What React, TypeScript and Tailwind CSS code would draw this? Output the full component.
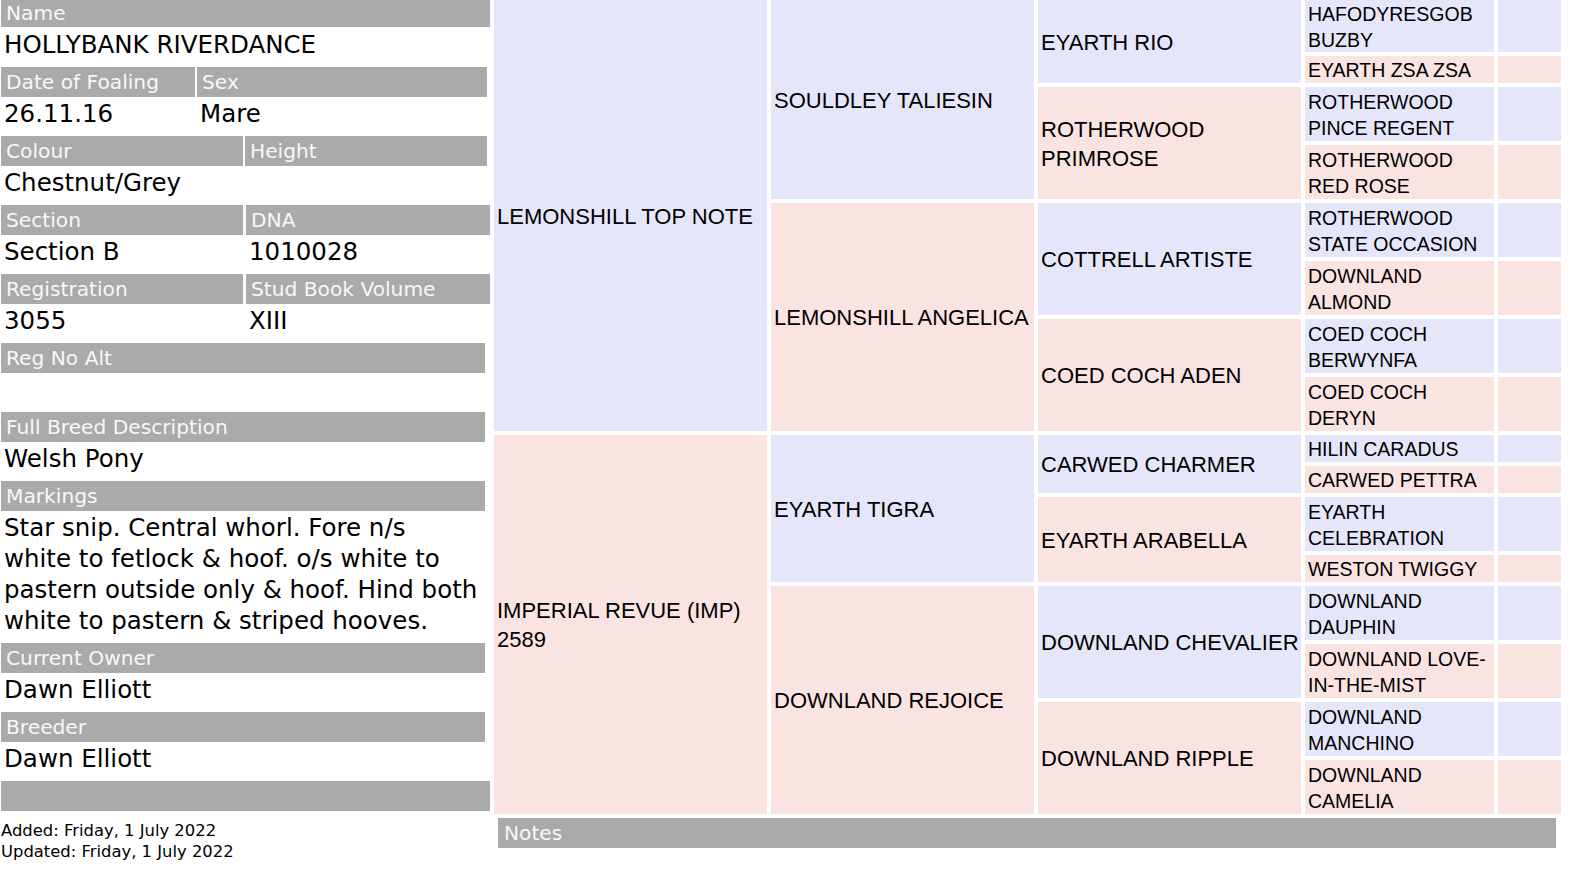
import React from "react";

const LAV = "bg-[#e6e6fa]";
const PINK = "bg-[#fae4e2]";

function Label({ children, className = "" }: { children?: React.ReactNode; className?: string }) {
  return (
    <div className={`bg-[#aaaaaa] h-[30px] leading-[30px] pl-[5px] text-[20.2px] text-[#f8f8f8] whitespace-nowrap overflow-hidden ${className}`}>
      {children}
    </div>
  );
}

function Value({ children, className = "" }: { children?: React.ReactNode; className?: string }) {
  return (
    <div className={`h-[39px] pt-[2px] pl-[3px] text-[24.5px] leading-[29px] text-black whitespace-nowrap ${className}`}>
      {children}
    </div>
  );
}

type Cell = { text: React.ReactNode; cls: string };

const cells: Cell[] = [
  // column 1
  { text: "LEMONSHILL TOP NOTE", cls: `col-start-1 row-start-1 row-span-8 ${LAV} big` },
  { text: (<>IMPERIAL REVUE (IMP)<br />2589</>), cls: `col-start-1 row-start-9 row-span-8 ${PINK} big` },
  // column 2
  { text: "SOULDLEY TALIESIN", cls: `col-start-2 row-start-1 row-span-4 ${LAV} big` },
  { text: "LEMONSHILL ANGELICA", cls: `col-start-2 row-start-5 row-span-4 ${PINK} big` },
  { text: "EYARTH TIGRA", cls: `col-start-2 row-start-9 row-span-4 ${LAV} big` },
  { text: "DOWNLAND REJOICE", cls: `col-start-2 row-start-13 row-span-4 ${PINK} big` },
  // column 3
  { text: "EYARTH RIO", cls: `col-start-3 row-start-1 row-span-2 ${LAV} big` },
  { text: (<>ROTHERWOOD<br />PRIMROSE</>), cls: `col-start-3 row-start-3 row-span-2 ${PINK} big` },
  { text: "COTTRELL ARTISTE", cls: `col-start-3 row-start-5 row-span-2 ${LAV} big` },
  { text: "COED COCH ADEN", cls: `col-start-3 row-start-7 row-span-2 ${PINK} big` },
  { text: "CARWED CHARMER", cls: `col-start-3 row-start-9 row-span-2 ${LAV} big` },
  { text: "EYARTH ARABELLA", cls: `col-start-3 row-start-11 row-span-2 ${PINK} big` },
  { text: "DOWNLAND CHEVALIER", cls: `col-start-3 row-start-13 row-span-2 ${LAV} big` },
  { text: "DOWNLAND RIPPLE", cls: `col-start-3 row-start-15 row-span-2 ${PINK} big` },
  // column 4
  { text: (<>HAFODYRESGOB<br />BUZBY</>), cls: `col-start-4 row-start-1 ${LAV} small` },
  { text: "EYARTH ZSA ZSA", cls: `col-start-4 row-start-2 ${PINK} small` },
  { text: (<>ROTHERWOOD<br />PINCE REGENT</>), cls: `col-start-4 row-start-3 ${LAV} small` },
  { text: (<>ROTHERWOOD<br />RED ROSE</>), cls: `col-start-4 row-start-4 ${PINK} small` },
  { text: (<>ROTHERWOOD<br />STATE OCCASION</>), cls: `col-start-4 row-start-5 ${LAV} small` },
  { text: (<>DOWNLAND<br />ALMOND</>), cls: `col-start-4 row-start-6 ${PINK} small` },
  { text: (<>COED COCH<br />BERWYNFA</>), cls: `col-start-4 row-start-7 ${LAV} small` },
  { text: (<>COED COCH<br />DERYN</>), cls: `col-start-4 row-start-8 ${PINK} small` },
  { text: "HILIN CARADUS", cls: `col-start-4 row-start-9 ${LAV} small` },
  { text: "CARWED PETTRA", cls: `col-start-4 row-start-10 ${PINK} small` },
  { text: (<>EYARTH<br />CELEBRATION</>), cls: `col-start-4 row-start-11 ${LAV} small` },
  { text: "WESTON TWIGGY", cls: `col-start-4 row-start-12 ${PINK} small` },
  { text: (<>DOWNLAND<br />DAUPHIN</>), cls: `col-start-4 row-start-13 ${LAV} small` },
  { text: (<>DOWNLAND LOVE-<br />IN-THE-MIST</>), cls: `col-start-4 row-start-14 ${PINK} small` },
  { text: (<>DOWNLAND<br />MANCHINO</>), cls: `col-start-4 row-start-15 ${LAV} small` },
  { text: (<>DOWNLAND<br />CAMELIA</>), cls: `col-start-4 row-start-16 ${PINK} small` },
  // column 5
  { text: null, cls: `col-start-5 row-start-1 ${LAV}` },
  { text: null, cls: `col-start-5 row-start-2 ${PINK}` },
  { text: null, cls: `col-start-5 row-start-3 ${LAV}` },
  { text: null, cls: `col-start-5 row-start-4 ${PINK}` },
  { text: null, cls: `col-start-5 row-start-5 ${LAV}` },
  { text: null, cls: `col-start-5 row-start-6 ${PINK}` },
  { text: null, cls: `col-start-5 row-start-7 ${LAV}` },
  { text: null, cls: `col-start-5 row-start-8 ${PINK}` },
  { text: null, cls: `col-start-5 row-start-9 ${LAV}` },
  { text: null, cls: `col-start-5 row-start-10 ${PINK}` },
  { text: null, cls: `col-start-5 row-start-11 ${LAV}` },
  { text: null, cls: `col-start-5 row-start-12 ${PINK}` },
  { text: null, cls: `col-start-5 row-start-13 ${LAV}` },
  { text: null, cls: `col-start-5 row-start-14 ${PINK}` },
  { text: null, cls: `col-start-5 row-start-15 ${LAV}` },
  { text: null, cls: `col-start-5 row-start-16 ${PINK}` },
];

function cellClass(cls: string) {
  if (cls.includes(" big")) return `${cls.replace(" big", "")} text-[22px] leading-[29px] pl-[3px]`;
  if (cls.includes(" small")) return `${cls.replace(" small", "")} text-[19.5px] leading-[26px] pl-[3px]`;
  return cls;
}

export default function App() {
  return (
    <div className="w-[1570px] h-[872px] bg-white overflow-hidden flex text-black">
      {/* Left details panel */}
      <div className="w-[494px] shrink-0 pl-[1px] flex flex-col font-['DejaVu_Sans',Verdana,sans-serif]">
        <div className="w-[489px]">
          <div className="bg-[#aaaaaa] h-[27px] leading-[27px] pl-[5px] text-[20.2px] text-[#f8f8f8]">Name</div>
          <div className="h-[40px] pt-[3px] pl-[3px] text-[24.5px] leading-[29px]">HOLLYBANK RIVERDANCE</div>
        </div>

        <div className="flex gap-[2px] w-[486px]">
          <div className="w-[194px]">
            <Label>Date of Foaling</Label>
            <Value>26.11.16</Value>
          </div>
          <div className="flex-1">
            <Label>Sex</Label>
            <Value>Mare</Value>
          </div>
        </div>

        <div className="flex gap-[2px] w-[486px]">
          <div className="w-[242px]">
            <Label>Colour</Label>
            <Value>Chestnut/Grey</Value>
          </div>
          <div className="flex-1">
            <Label>Height</Label>
            <Value></Value>
          </div>
        </div>

        <div className="flex gap-[3px] w-[489px]">
          <div className="w-[242px]">
            <Label>Section</Label>
            <Value>Section B</Value>
          </div>
          <div className="flex-1">
            <Label>DNA</Label>
            <Value>1010028</Value>
          </div>
        </div>

        <div className="flex gap-[3px] w-[489px]">
          <div className="w-[242px]">
            <Label>Registration</Label>
            <Value>3055</Value>
          </div>
          <div className="flex-1">
            <Label>Stud Book Volume</Label>
            <Value>XIII</Value>
          </div>
        </div>

        <div className="w-[484px]">
          <Label>Reg No Alt</Label>
          <Value></Value>
          <Label>Full Breed Description</Label>
          <Value>Welsh Pony</Value>
          <Label>Markings</Label>
          <div className="h-[132px] pt-[1px] pl-[3px] text-[24.5px] leading-[31px] whitespace-nowrap">
            Star snip. Central whorl. Fore n/s
            <br />
            white to fetlock &amp; hoof. o/s white to
            <br />
            pastern outside only &amp; hoof. Hind both
            <br />
            white to pastern &amp; striped hooves.
          </div>
          <Label>Current Owner</Label>
          <Value>Dawn Elliott</Value>
          <Label>Breeder</Label>
          <Value>Dawn Elliott</Value>
        </div>

        <div className="w-[489px] h-[30px] bg-[#aaaaaa]"></div>

        <div className="-ml-[1px] mt-[9px] text-[16.4px] leading-[21px] pl-[1px]">
          <div>Added: Friday, 1 July 2022</div>
          <div>Updated: Friday, 1 July 2022</div>
        </div>
      </div>

      {/* Pedigree */}
      <div className="flex flex-col font-['Liberation_Sans',Arial,sans-serif]">
        <div className="grid grid-cols-[273px_263px_263px_189px_63px] grid-rows-[52px_27px_54px_54px_54px_54px_54px_54px_27px_27px_54px_27px_54px_54px_54px_54px] gap-[4px]">
          {cells.map((c, i) => (
            <div key={i} className={`flex items-center whitespace-nowrap overflow-hidden ${cellClass(c.cls)}`}>
              {c.text && <div className="pt-[1px]">{c.text}</div>}
            </div>
          ))}
        </div>
        <div className="mt-[4px] ml-[4px] w-[1058px] h-[30px] bg-[#aaaaaa] pl-[6px] text-[20.2px] leading-[30px] text-[#f8f8f8] font-['DejaVu_Sans',Verdana,sans-serif]">
          Notes
        </div>
      </div>
    </div>
  );
}
